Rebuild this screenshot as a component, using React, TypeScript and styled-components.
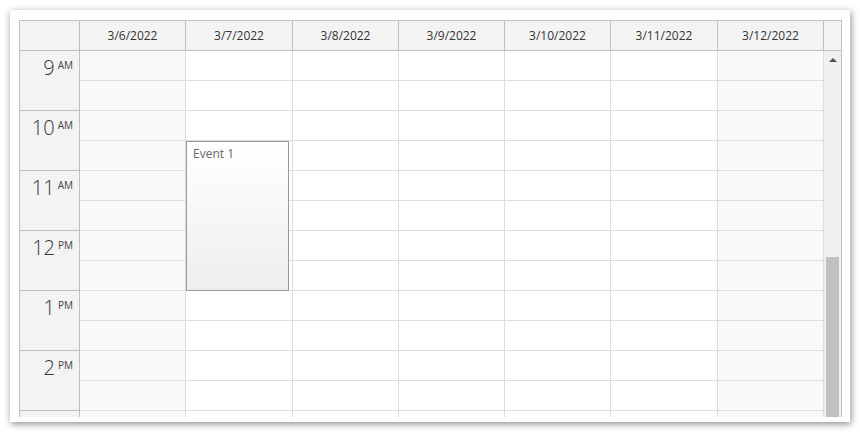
import styled, { createGlobalStyle } from 'styled-components';

const DAYS = [
    { label: '3/6/2022', weekend: true },
    { label: '3/7/2022', weekend: false },
    { label: '3/8/2022', weekend: false },
    { label: '3/9/2022', weekend: false },
    { label: '3/10/2022', weekend: false },
    { label: '3/11/2022', weekend: false },
    { label: '3/12/2022', weekend: true },
];

// the last hour is scrolled below the fold, its label is not visible
const HOURS = [
    { h: '9', ap: 'AM' },
    { h: '10', ap: 'AM' },
    { h: '11', ap: 'AM' },
    { h: '12', ap: 'PM' },
    { h: '1', ap: 'PM' },
    { h: '2', ap: 'PM' },
    { h: '', ap: '' },
];

const DAY_COLS = '106px 107px 106px 106px 106px 107px 106px';
const CELL = 30;

const GlobalStyle = createGlobalStyle`
    html, body {
        margin: 0;
        padding: 0;
        background: #ffffff;
        font-family: "Open Sans", "Noto Sans", sans-serif;
    }
`

const Page = styled.div`
    padding: 10px;
`

const Card = styled.div`
    width: 840px;
    height: 412px;
    box-sizing: border-box;
    padding: 10px 8px 5px 9px;
    background: #fff;
    box-shadow: 1px 2px 7px rgba(0, 0, 0, 0.45);
    overflow: hidden;
`

const Calendar = styled.div`
    width: 823px;
    height: 397px;
    box-sizing: border-box;
    border: 1px solid #c0c0c0;
    border-bottom: none;
    overflow: hidden;
    display: flex;
    flex-direction: column;
`

const HeaderRow = styled.div`
    display: grid;
    grid-template-columns: 60px ${DAY_COLS} 17px;
    height: 30px;
    box-sizing: border-box;
    background: #f3f3f3;
    border-bottom: 1px solid #c0c0c0;
    flex-shrink: 0;
`

const HeaderCell = styled.div`
    display: flex;
    align-items: center;
    justify-content: center;
    font-size: 12px;
    color: #333;
    border-right: 1px solid #c0c0c0;
    box-sizing: border-box;
`

const CornerCell = styled(HeaderCell)``

const ScrollHeader = styled.div`
    background: #f3f3f3;
`

const Body = styled.div`
    display: grid;
    grid-template-columns: 60px ${DAY_COLS} 17px;
    flex: 1;
    overflow: hidden;
`

const RowHeader = styled.div`
    background: #f3f3f3;
    border-right: 1px solid #c0c0c0;
    display: flex;
    flex-direction: column;
`

const HourCell = styled.div`
    height: ${CELL * 2}px;
    flex-shrink: 0;
    box-sizing: border-box;
    border-bottom: 1px solid #c0c0c0;
    display: flex;
    justify-content: flex-end;
    align-items: flex-start;
    padding: 4px 6px 0 0;
    color: #333;
`

const HourNum = styled.span`
    font-size: 20px;
    line-height: 26px;
    font-weight: 300;
`

const AmPm = styled.span`
    font-size: 10px;
    line-height: 14px;
    margin-left: 3px;
    margin-top: 3px;
    color: #444;
`

const DayColumn = styled.div<{ $weekend: boolean }>`
    position: relative;
    background: ${p => (p.$weekend ? '#f9f9f9' : '#ffffff')};
    border-right: 1px solid #dddddd;
    display: flex;
    flex-direction: column;
`

const Cell = styled.div`
    height: ${CELL}px;
    flex-shrink: 0;
    box-sizing: border-box;
    border-bottom: 1px solid #dddddd;
`

const Event = styled.div`
    position: absolute;
    left: 0;
    width: 103px;
    box-sizing: border-box;
    border: 1px solid #999999;
    background: linear-gradient(to bottom, #ffffff, #eeeeee);
    color: #666;
    font-size: 12px;
    padding: 3px 6px;
    z-index: 1;
`

const Scrollbar = styled.div`
    background: #f0f0f0;
    display: flex;
    flex-direction: column;
    align-items: center;
`

const ArrowUp = styled.div`
    margin-top: 7px;
    width: 0;
    height: 0;
    border-left: 4px solid transparent;
    border-right: 4px solid transparent;
    border-bottom: 4px solid #505050;
`

const Thumb = styled.div`
    margin-top: 195px;
    width: 13px;
    flex: 1;
    background: #c1c1c1;
`

export default function App() {
    return (
        <>
            <GlobalStyle />
            <Page>
                <Card>
                    <Calendar>
                        <HeaderRow>
                            <CornerCell />
                            {DAYS.map(d => (
                                <HeaderCell key={d.label}>{d.label}</HeaderCell>
                            ))}
                            <ScrollHeader />
                        </HeaderRow>
                        <Body>
                            <RowHeader>
                                {HOURS.map((h, i) => (
                                    <HourCell key={i}>
                                        {h.h && <HourNum>{h.h}</HourNum>}
                                        {h.ap && <AmPm>{h.ap}</AmPm>}
                                    </HourCell>
                                ))}
                            </RowHeader>
                            {DAYS.map((d, i) => (
                                <DayColumn key={d.label} $weekend={d.weekend}>
                                    {HOURS.flatMap((_, j) => [
                                        <Cell key={j + 'a'} />,
                                        <Cell key={j + 'b'} />,
                                    ])}
                                    {i === 1 && (
                                        <Event style={{ top: CELL * 3, height: CELL * 5 }}>
                                            Event 1
                                        </Event>
                                    )}
                                </DayColumn>
                            ))}
                            <Scrollbar>
                                <ArrowUp />
                                <Thumb />
                            </Scrollbar>
                        </Body>
                    </Calendar>
                </Card>
            </Page>
        </>
    );
}
